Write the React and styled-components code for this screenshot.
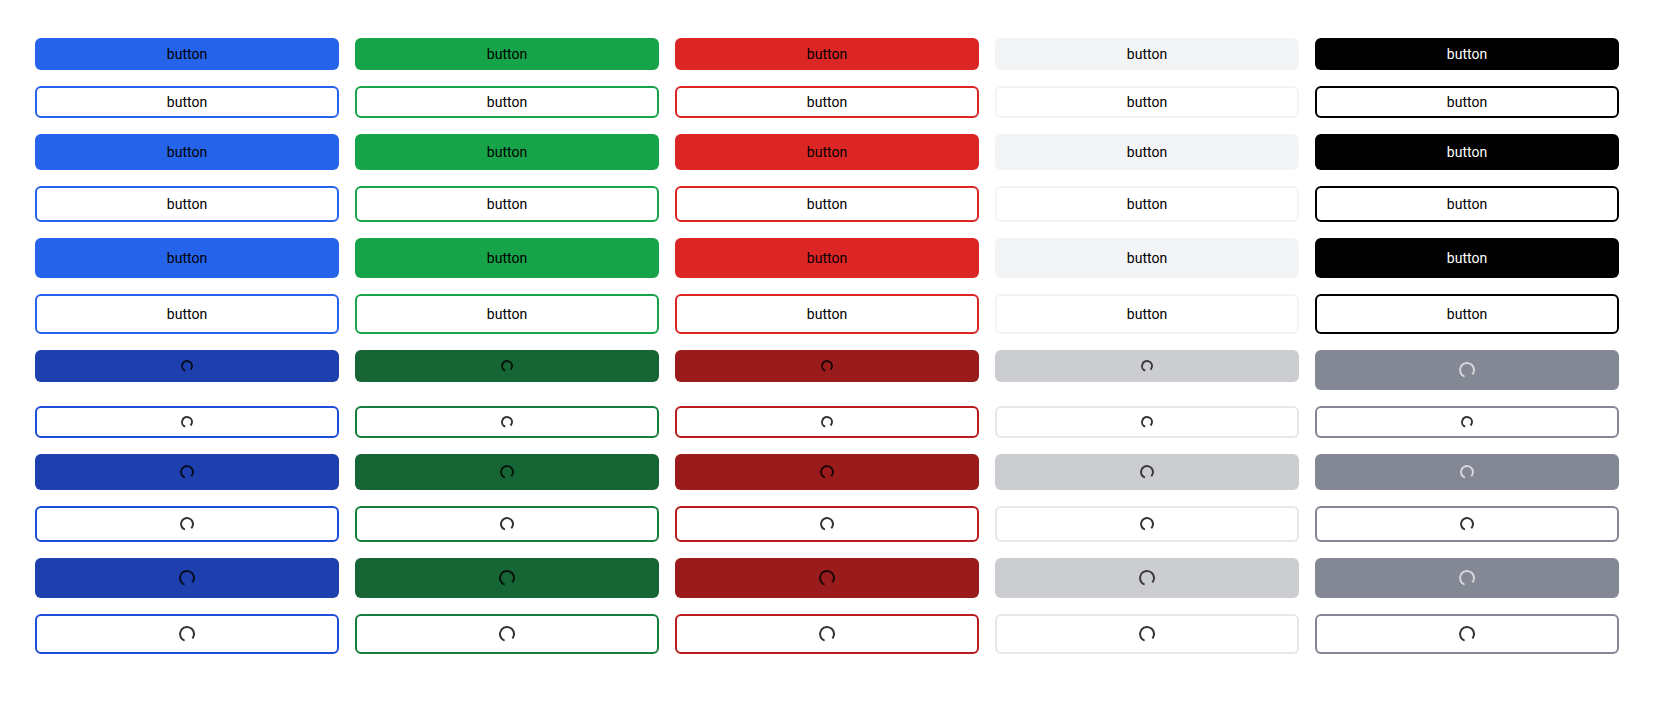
import React from "react";
import styled, { createGlobalStyle, css } from "styled-components";

const GlobalStyle = createGlobalStyle`
	body {
		margin: 0;
		background: #ffffff;
		font-family: Roboto, "Liberation Sans", sans-serif;
	}
`;

const palette = [
	{ name: "blue", main: "#2563eb", loadBg: "#1e40af", loadBorder: "#1d4ed8", text: "#000", spin: "rgba(0,0,0,0.8)" },
	{ name: "green", main: "#16a34a", loadBg: "#166534", loadBorder: "#15803d", text: "#000", spin: "rgba(0,0,0,0.8)" },
	{ name: "red", main: "#dc2626", loadBg: "#991b1b", loadBorder: "#b91c1c", text: "#000", spin: "rgba(0,0,0,0.8)" },
	{ name: "gray", main: "#f3f4f6", loadBg: "#cbcdd1", loadBorder: "#e5e7eb", text: "#000", spin: "#3a3a3a" },
	{ name: "black", main: "#000000", loadBg: "#838894", loadBorder: "#838894", text: "#fff", spin: "#d6d8dc" },
];

const heights = { sm: 32, md: 36, lg: 40 };
const spinners = { sm: 12, md: 14, lg: 16 };

const Page = styled.div`
	padding: 38px 0 40px 35px;
`;

const Grid = styled.div`
	display: grid;
	grid-template-columns: repeat(5, 304px);
	gap: 16px;
	align-items: start;
`;

const Button = styled.button`
	display: flex;
	align-items: center;
	justify-content: center;
	box-sizing: border-box;
	width: 100%;
	height: ${(p) => heights[p.$size]}px;
	padding: 0 12px;
	border-radius: 6px;
	font-family: Roboto, "Liberation Sans", sans-serif;
	font-size: 14px;
	cursor: pointer;
	${(p) =>
		p.$outline
			? css`
					background: #ffffff;
					border: 2px solid ${p.$loading ? p.$tone.loadBorder : p.$tone.main};
					color: #000;
			  `
			: css`
					background: ${p.$loading ? p.$tone.loadBg : p.$tone.main};
					border: none;
					color: ${p.$tone.text};
			  `}
`;

const SpinnerSvg = styled.svg`
	display: block;
	transform: rotate(110deg);
`;

const Spinner = ({ size, color }) => {
	const r = (size - 2) / 2;
	const c = 2 * Math.PI * r;
	return (
		<SpinnerSvg width={size} height={size} viewBox={`0 0 ${size} ${size}`}>
			<circle
				cx={size / 2}
				cy={size / 2}
				r={r}
				fill="none"
				stroke={color}
				strokeWidth="2"
				strokeDasharray={`${c * 0.8} ${c * 0.2}`}
			/>
		</SpinnerSvg>
	);
};

const rows = [];
[false, true].forEach((loading) => {
	["sm", "md", "lg"].forEach((size) => {
		rows.push({ size, outline: false, loading });
		rows.push({ size, outline: true, loading });
	});
});

const App = () => (
	<>
		<GlobalStyle />
		<Page>
			<Grid>
				{rows.map((row, i) =>
					palette.map((tone) => {
						// the small black filled loading button renders at the large size
						const size =
							row.loading && !row.outline && row.size === "sm" && tone.name === "black"
								? "lg"
								: row.size;
						return (
							<Button
								key={`${i}-${tone.name}`}
								$size={size}
								$outline={row.outline}
								$loading={row.loading}
								$tone={tone}>
								{row.loading ? (
									<Spinner
										size={spinners[size]}
										color={row.outline ? "#333" : tone.spin}
									/>
								) : (
									"button"
								)}
							</Button>
						);
					})
				)}
			</Grid>
		</Page>
	</>
);

export default App;
